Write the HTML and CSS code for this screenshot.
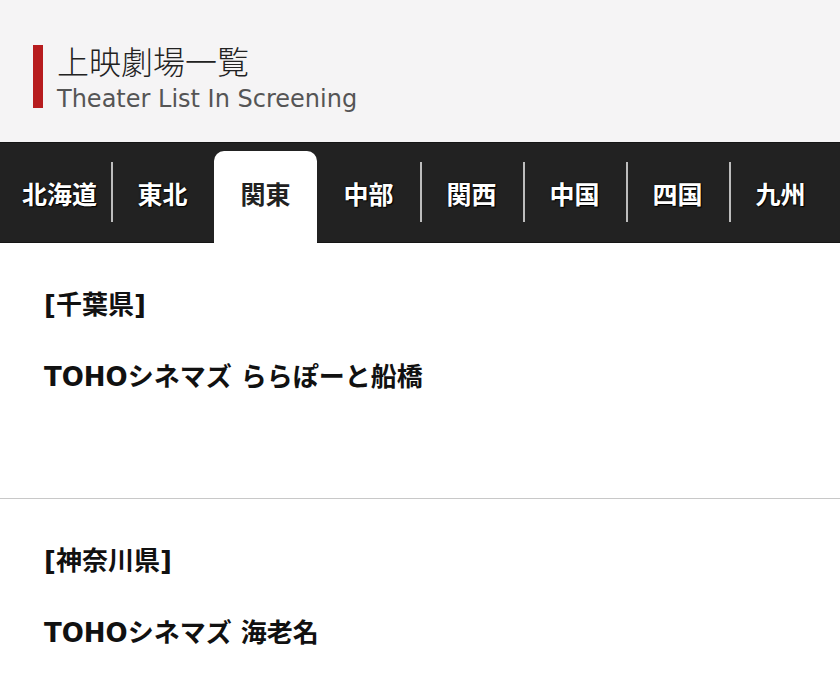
FILE: index.html
```html
<!DOCTYPE html>
<html lang="ja">
<head>
<meta charset="utf-8">
<title>上映劇場一覧</title>
<link rel="stylesheet" href="styles.css">
</head>
<body>
<header class="page-head">
  <div class="head-title">
    <h1 class="title-ja">上映劇場一覧</h1>
    <p class="title-en">Theater List In Screening</p>
  </div>
</header>
<nav class="area-nav">
  <ul class="tabs">
    <li class="tab">北海道</li>
    <li class="tab">東北</li>
    <li class="tab active">関東</li>
    <li class="tab">中部</li>
    <li class="tab">関西</li>
    <li class="tab">中国</li>
    <li class="tab">四国</li>
    <li class="tab last">九州</li>
  </ul>
</nav>
<main class="list">
  <section class="pref">
    <h2 class="pref-name">[千葉県]</h2>
    <p class="theater">TOHOシネマズ ららぽーと船橋</p>
  </section>
  <section class="pref">
    <h2 class="pref-name">[神奈川県]</h2>
    <p class="theater">TOHOシネマズ 海老名</p>
  </section>
</main>
</body>
</html>
```
FILE: styles.css
```css
* { box-sizing: border-box; }
html, body { margin: 0; padding: 0; }
body {
  width: 840px;
  background: #fff;
  font-family: "DejaVu Sans", "Noto Sans CJK JP", sans-serif;
  color: #111;
}
.page-head {
  background: #f5f4f5;
  height: 142px;
  padding: 45px 0 0 33px;
}
.head-title {
  border-left: 10px solid #b71c1e;
  padding-left: 14px;
  height: 63px;
  display: flex;
  flex-direction: column;
  justify-content: space-between;
}
.title-ja {
  margin: 0;
  font-family: "Noto Sans CJK JP", sans-serif;
  font-weight: 300;
  font-size: 32px;
  line-height: 32px;
  color: #222;
  margin-top: -1px;
}
.title-en {
  margin: 0;
  font-size: 24px;
  line-height: 24px;
  color: #555;
  margin-bottom: -3px;
}
.area-nav {
  background: #222;
  border-top: 1px solid #151515;
  border-bottom: 1px solid #151515;
  height: 101px;
  padding: 0 8px;
}
.tabs {
  list-style: none;
  margin: 0;
  padding: 0;
  display: grid;
  grid-template-columns: repeat(8, 1fr);
  height: 100%;
}
.tab {
  position: relative;
  display: flex;
  align-items: center;
  justify-content: center;
  color: #fff;
  font-family: "Noto Sans CJK JP", sans-serif;
  font-weight: 700;
  font-size: 25px;
  text-shadow: 0 0 2px #000, 1px 1px 1px #000;
}
.tab::after {
  content: "";
  position: absolute;
  right: -2px;
  top: 19px;
  width: 2px;
  height: 60px;
  background: #bdbdbd;
}
.tab.last::after,
.tab.active::after,
.tab:nth-child(2)::after { display: none; }
.tab.active {
  background: #fff;
  color: #222;
  text-shadow: none;
  border-radius: 10px 10px 0 0;
  margin-top: 8px;
  margin-bottom: -1px;
  padding-bottom: 8px;
}
.pref {
  padding: 43px 44px 102px;
  border-bottom: 1px solid #c8c8c8;
}
.pref-name,
.theater {
  margin: 0;
  font-weight: 700;
  font-size: 26px;
  line-height: 38px;
  color: #111;
}
.theater { margin-top: 34px; }
```
